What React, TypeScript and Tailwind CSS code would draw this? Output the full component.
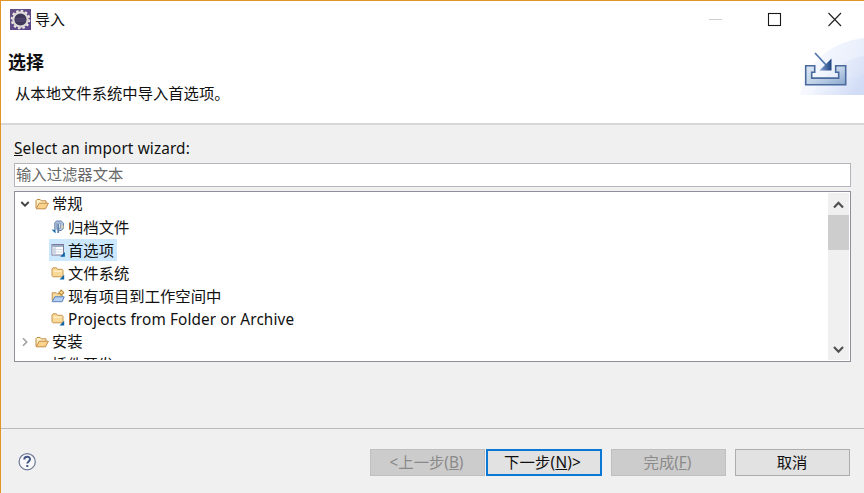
import type { ReactNode } from 'react';

function EclipseIcon() {
  return (
    <svg width="21" height="21" viewBox="0 0 21 21">
      <defs>
        <linearGradient id="logo" x1="0" y1="0" x2="1" y2="1">
          <stop offset="0" stopColor="#655083" />
          <stop offset="1" stopColor="#5b438c" />
        </linearGradient>
      </defs>
      <rect width="21" height="21" fill="url(#logo)" />
      <circle cx="10.5" cy="10.5" r="8.8" fill="none" stroke="#ece8e2" strokeWidth="2" strokeDasharray="2.5 2.1" />
      <circle cx="10.5" cy="10.5" r="7.2" fill="#43385f" stroke="#dedad8" strokeWidth="2.2" />
      <circle cx="10.5" cy="10.5" r="5.6" fill="#3f3858" />
      <path d="M5.5 9.8h10M5.5 12h10" stroke="#5a4d7c" strokeWidth="1" />
    </svg>
  );
}

function BannerArt() {
  return (
    <svg width="64" height="57" viewBox="0 0 64 57" className="block">
      <defs>
        <linearGradient id="sweep" x1="0" y1="0" x2="1" y2="0.3">
          <stop offset="0" stopColor="#fbfcff" />
          <stop offset="1" stopColor="#e8eefb" />
        </linearGradient>
        <linearGradient id="sweep2" x1="0" y1="0" x2="1" y2="0.4">
          <stop offset="0" stopColor="#f3f6fe" stopOpacity="0.3" />
          <stop offset="1" stopColor="#ccd8f5" />
        </linearGradient>
        <linearGradient id="tray" x1="0" y1="0" x2="1" y2="1">
          <stop offset="0" stopColor="#dce8f5" />
          <stop offset="0.5" stopColor="#c3d4e8" />
          <stop offset="1" stopColor="#8aa7cd" />
        </linearGradient>
        <linearGradient id="head" x1="0" y1="0" x2="1" y2="0">
          <stop offset="0" stopColor="#87a5cd" />
          <stop offset="1" stopColor="#1e4384" />
        </linearGradient>
      </defs>
      <path d="M0 57C6 25 30 4 64 0v57z" fill="url(#sweep)" />
      <path d="M12 57C24 36 42 22 64 18v39z" fill="url(#sweep2)" opacity="0.55" />
      <path d="M38 42Q52 41 64 36v21H20z" fill="url(#sweep2)" opacity="0.6" />
      <path d="M5.7 27.7h9v6.6h-3v5.8h27v-5.8h-3v-6.6h10v19h-40z" fill="url(#tray)" stroke="#4a6a9e" strokeWidth="1.6" />
      <path d="M15 15l12 13" stroke="#5276aa" strokeWidth="1.8" />
      <path d="M19.5 32.5L31.5 20.5v12z" fill="url(#head)" />
    </svg>
  );
}

function OpenFolder() {
  return (
    <svg width="14" height="14" viewBox="0 0 14 14">
      <path d="M1 11V3.5L2 2.5h3.2l1 1.3H11V6" fill="#fff0c4" stroke="#c08a45" strokeWidth="1" />
      <path d="M1.2 11.8L4.2 6.2h9.2L10.5 11.8z" fill="#fbd38c" stroke="#c08a45" strokeWidth="1" />
    </svg>
  );
}

function ArchiveIcon() {
  return (
    <svg width="14" height="14" viewBox="0 0 14 14">
      <path d="M3.8 10V2.6L5.8 1h4.4l2.3 2.2v5L10.2 10.6H8" fill="#b4c8e0" stroke="#647fa9" />
      <path d="M5.8 3.2h3.6v5H5.8z" fill="#f2f5f7" stroke="#647fa9" strokeWidth="0.7" />
      <path d="M7.2 4v9" stroke="#6482ae" strokeWidth="1.8" />
      <path d="M10.6 5.5h1.9V8h-1.9z" fill="#e2d59f" />
      <path d="M0.5 9.5L4.5 13.5V10z" fill="#156caf" />
    </svg>
  );
}

function PreferencesIcon() {
  return (
    <svg width="14" height="14" viewBox="0 0 14 14">
      <rect x="1" y="1.5" width="11.5" height="10.5" fill="#fff" stroke="#7c7895" />
      <path d="M1.4 2h10.7v2H1.4z" fill="#9badc8" />
      <path d="M1.4 4.5h3v7h-3z" fill="#d3dbe9" />
      <path d="M1.4 6.5h10.7M1.4 9h10.7M4.6 4v7.5" stroke="#c5cede" strokeWidth="0.7" />
      <path d="M13.9 9v4.8H9.2z" fill="#0c62a7" />
    </svg>
  );
}

function ClosedFolder() {
  return (
    <svg width="14" height="14" viewBox="0 0 14 14">
      <path d="M1 9.8V3l1-1.2h3.5l1 1.5h4.6l.9 1v6.5H2z" fill="#f8d998" stroke="#c8954f" />
      <path d="M2.3 5.2h8.5" stroke="#fff0cc" strokeWidth="1.2" />
      <path d="M13.2 8.7v4.7H8.5z" fill="#0e63a4" />
    </svg>
  );
}

function ProjectFolder() {
  return (
    <svg width="14" height="14" viewBox="0 0 14 14">
      <path d="M1.2 11.5V3.8h4l1 1H11v3" fill="#f7dca0" stroke="#c29151" />
      <path d="M1.2 12.7L3.8 7.8h9.4l-2 4.9z" fill="#b5d0f5" stroke="#5b80bd" />
      <path d="M10.3.8v5.6M7.5 3.6h5.6" stroke="#b98734" strokeWidth="2.2" />
      <path d="M10.3 2.2v2.8M8.9 3.6h2.8" stroke="#ffe59d" strokeWidth="1" />
    </svg>
  );
}

function Child({ icon, selected, children }: { icon: ReactNode; selected?: boolean; children: ReactNode }) {
  return (
    <div className="flex h-[23px] shrink-0 pl-[33px]">
      <div className={selected ? 'flex h-[22px] items-center bg-[#cce8ff] pr-[3px] pl-[2px]' : 'flex h-[22px] items-center pr-[3px] pl-[2px]'}>
        {icon}
        <span className="ml-[3px] leading-[22px]">{children}</span>
      </div>
    </div>
  );
}

function Parent({ open, children }: { open?: boolean; children: ReactNode }) {
  return (
    <div className="flex h-[23px] shrink-0 items-center pb-[2px] pl-[4px]">
      <svg width="10" height="10" viewBox="0 0 10 10" fill="none">
        {open ? (
          <path d="M1.3 3L5 6.7 8.7 3" stroke="#404040" strokeWidth="1.8" />
        ) : (
          <path d="M3 1.2L6.7 5 3 8.8" stroke="#a0a0a0" strokeWidth="1.6" />
        )}
      </svg>
      <span className="ml-[5px]"><OpenFolder /></span>
      <span className="ml-[3px] leading-[21px]">{children}</span>
    </div>
  );
}

const disabledButton = 'flex h-[27px] w-[115px] items-center justify-center border border-[#bfbfbf] bg-[#cccccc] pr-[2px] text-[#8a8a8a]';

export default function App() {
  return (
    <div className="flex h-[493px] w-[864px] flex-col overflow-hidden border-t border-l border-[#e39427] bg-[#f0f0f0] font-['Noto_Sans','Noto_Sans_CJK_SC',sans-serif] text-[15.33px] text-[#101010]">
      <header className="flex h-[124px] shrink-0 flex-col border-b-2 border-[#d7d7d7] bg-white">
        <div className="flex h-[36px] items-center pl-[9px]">
          <EclipseIcon />
          <span className="ml-1 text-[15px]">导入</span>
          <svg className="ml-auto" width="155" height="36" viewBox="0 0 155 36" fill="none">
            <path d="M0 18.5h13" stroke="#cecece" />
            <rect x="59.5" y="12.5" width="12" height="12" stroke="#181818" strokeWidth="1.1" />
            <path d="M119.5 12l12.5 13M132 12l-12.5 13" stroke="#202020" strokeWidth="1.1" />
          </svg>
        </div>
        <div className="flex">
          <div className="flex flex-col pl-[7px]">
            <h1 className="mt-[13px] text-[18px] leading-[25px] font-bold">选择</h1>
            <p className="mt-[7px] ml-[7px] leading-[23px]">从本地文件系统中导入首选项。</p>
          </div>
          <div className="ml-auto pt-px"><BannerArt /></div>
        </div>
      </header>

      <main className="flex h-[303px] shrink-0 flex-col pr-[13px] pl-[13px]">
        <label className="mt-[12px] h-[26px] leading-[23px] tracking-[0.13px]"><span className="underline">S</span>elect an import wizard:</label>
        <div className="flex h-[24px] shrink-0 items-center border border-[#b5b5bb] bg-white pb-px pl-[1px] text-[#686868]">输入过滤器文本</div>
        <div className="mt-1 flex h-[171px] shrink-0 border border-[#8d9098] bg-white p-px">
          <div className="flex min-w-0 flex-1 flex-col overflow-hidden">
            <Parent open>常规</Parent>
            <Child icon={<ArchiveIcon />}>归档文件</Child>
            <Child icon={<PreferencesIcon />} selected>首选项</Child>
            <Child icon={<ClosedFolder />}>文件系统</Child>
            <Child icon={<ProjectFolder />}>现有项目到工作空间中</Child>
            <Child icon={<ClosedFolder />}><span className="tracking-[0.12px]">Projects from Folder or Archive</span></Child>
            <Parent>安装</Parent>
            <div className="pl-[36px] leading-[21px]">插件开发</div>
          </div>
          <div className="flex w-[21px] flex-col items-center bg-[#f0f0f0]">
            <svg width="21" height="21" viewBox="0 0 21 21" fill="none"><path d="M6 14.5l4.5-4.7L15 14.5" stroke="#505050" strokeWidth="2.2" /></svg>
            <div className="mt-px h-[35px] w-full bg-[#cdcdcd]" />
            <svg className="mt-auto" width="21" height="21" viewBox="0 0 21 21" fill="none"><path d="M6 8l4.5 4.7L15 8" stroke="#505050" strokeWidth="2.2" /></svg>
          </div>
        </div>
      </main>

      <footer className="flex h-[65px] shrink-0 items-start border-t border-[#bababa] pt-[20px] pr-[14px] pl-[17px]">
        <svg className="mt-[3px]" width="19" height="19" viewBox="0 0 19 19" fill="none">
          <circle cx="9.2" cy="9.7" r="8.1" fill="#f8f8fa" stroke="#6c7894" strokeWidth="1.2" />
          <path d="M6.3 7.4C6.3 3.8 12 3.8 12 7.2c0 2.3-2.7 2.2-2.7 4.4M9.3 13v2" stroke="#405785" strokeWidth="2" />
        </svg>
        <div className="ml-auto flex">
          <button className={disabledButton}><span>&lt;上一步(<u>B</u>)</span></button>
          <button className="ml-[1px] flex h-[27px] w-[116px] items-center justify-center border-2 border-[#0b78d5] bg-[#e2e2e2] pr-[3px]"><span className="tracking-[0.2px]">下一步(<u>N</u>)&gt;</span></button>
          <button className={disabledButton + ' ml-[9px]'}><span>完成(<u>F</u>)</span></button>
          <button className="ml-[9px] flex h-[27px] w-[115px] items-center justify-center border border-[#adadad] bg-[#e2e2e2] pr-px">取消</button>
        </div>
      </footer>
    </div>
  );
}
